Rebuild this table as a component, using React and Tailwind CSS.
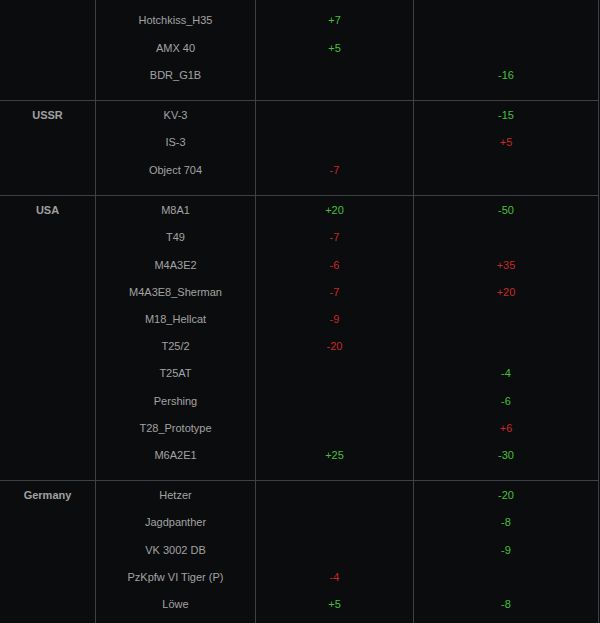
import React from 'react';

const sections = [
    {
        country: '',
        pad: 'pt-[7px] pb-[11.4px]',
        rows: [
            ['Hotchkiss_H35', '+7', ''],
            ['AMX 40', '+5', ''],
            ['BDR_G1B', '', '-16'],
        ],
    },
    {
        country: 'USSR',
        pad: 'pt-[1px] pb-[11.4px]',
        rows: [
            ['KV-3', '', '-15'],
            ['IS-3', '', '+5r'],
            ['Object 704', '-7r', ''],
        ],
    },
    {
        country: 'USA',
        pad: 'pt-[1px] pb-[11px]',
        rows: [
            ['M8A1', '+20', '-50'],
            ['T49', '-7r', ''],
            ['M4A3E2', '-6r', '+35r'],
            ['M4A3E8_Sherman', '-7r', '+20r'],
            ['M18_Hellcat', '-9r', ''],
            ['T25/2', '-20r', ''],
            ['T25AT', '', '-4'],
            ['Pershing', '', '-6'],
            ['T28_Prototype', '', '+6r'],
            ['M6A2E1', '+25', '-30'],
        ],
    },
    {
        country: 'Germany',
        pad: 'pt-[1px] pb-[11px]',
        rows: [
            ['Hetzer', '', '-20'],
            ['Jagdpanther', '', '-8'],
            ['VK 3002 DB', '', '-9'],
            ['PzKpfw VI Tiger (P)', '-4r', ''],
            ['Löwe', '+5', '-8'],
        ],
    },
];

// values ending in "r" are drawn red, the rest green
function Value({ v }) {
    if (!v) return <div className="h-[27.2px]" />;
    const red = v.endsWith('r');
    return (
        <div className={`h-[27.2px] flex items-center justify-center ${red ? 'text-[#c42a26]' : 'text-[#45c03a]'}`}>
            {red ? v.slice(0, -1) : v}
        </div>
    );
}

export default function App() {
    return (
        <div className="h-[623px] w-[600px] overflow-hidden bg-[#0b0c0e] text-[11px] text-[#a3a3a3]" style={{ fontFamily: '"Liberation Sans", Arial, sans-serif' }}>
            {sections.map((s, i) => (
                <div key={i} className="flex w-[599px] border-b border-r border-[#3f4045]">
                    <div className={`w-[96px] shrink-0 border-r border-[#3f4045] ${s.pad}`}>
                        {s.country && (
                            <div className="h-[27.2px] flex items-center justify-center font-bold text-[#a0a0a0]">{s.country}</div>
                        )}
                    </div>
                    <div className={`w-[160px] shrink-0 border-r border-[#3f4045] ${s.pad}`}>
                        {s.rows.map((r, j) => (
                            <div key={j} className="h-[27.2px] flex items-center justify-center">{r[0]}</div>
                        ))}
                    </div>
                    <div className={`w-[158px] shrink-0 border-r border-[#3f4045] ${s.pad}`}>
                        {s.rows.map((r, j) => <Value key={j} v={r[1]} />)}
                    </div>
                    <div className={`flex-1 ${s.pad}`}>
                        {s.rows.map((r, j) => <Value key={j} v={r[2]} />)}
                    </div>
                </div>
            ))}
        </div>
    );
}
